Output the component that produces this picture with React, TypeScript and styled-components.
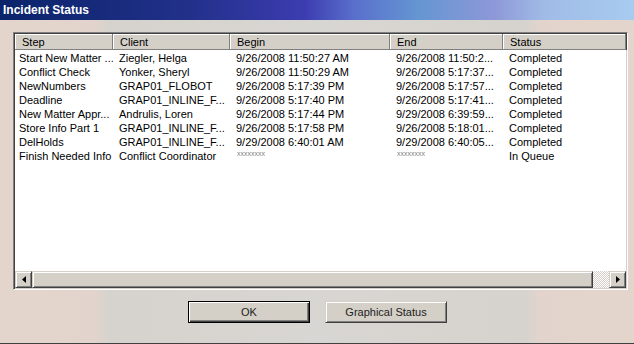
import React from "react";
import styled, { createGlobalStyle } from "styled-components";

const GlobalStyle = createGlobalStyle`
    html, body {
        margin: 0;
        padding: 0;
        background: #d6d3ce;
    }
`;

interface IRow {
    step: string;
    client: string;
    begin: string;
    end: string;
    status: string;
}

const rows: IRow[] = [
    { step: "Start New Matter ...", client: "Ziegler, Helga", begin: "9/26/2008 11:50:27 AM", end: "9/26/2008 11:50:2...", status: "Completed" },
    { step: "Conflict Check", client: "Yonker, Sheryl", begin: "9/26/2008 11:50:29 AM", end: "9/26/2008 5:17:37...", status: "Completed" },
    { step: "NewNumbers", client: "GRAP01_FLOBOT", begin: "9/26/2008 5:17:39 PM", end: "9/26/2008 5:17:57...", status: "Completed" },
    { step: "Deadline", client: "GRAP01_INLINE_F...", begin: "9/26/2008 5:17:40 PM", end: "9/26/2008 5:17:41...", status: "Completed" },
    { step: "New Matter Appr...", client: "Andrulis, Loren", begin: "9/26/2008 5:17:44 PM", end: "9/29/2008 6:39:59...", status: "Completed" },
    { step: "Store Info Part 1", client: "GRAP01_INLINE_F...", begin: "9/26/2008 5:17:58 PM", end: "9/26/2008 5:18:01...", status: "Completed" },
    { step: "DelHolds", client: "GRAP01_INLINE_F...", begin: "9/29/2008 6:40:01 AM", end: "9/29/2008 6:40:05...", status: "Completed" },
    { step: "Finish Needed Info", client: "Conflict Coordinator", begin: "", end: "", status: "In Queue" },
];

const columns = ["Step", "Client", "Begin", "End", "Status"];

export default function App() {
    return (
        <Window>
            <GlobalStyle />
            <TitleBar>Incident Status</TitleBar>
            <Body>
                <ListBox>
                    <HeaderRow>
                        {columns.map((c) => (
                            <HeaderCell key={c}>{c}</HeaderCell>
                        ))}
                    </HeaderRow>
                    <Rows>
                        {rows.map((r) => (
                            <Row key={r.step}>
                                <Cell first>{r.step}</Cell>
                                <Cell>{r.client}</Cell>
                                {r.begin ? <Cell>{r.begin}</Cell> : <Masked>xxxxxxxx</Masked>}
                                {r.end ? <Cell>{r.end}</Cell> : <Masked>xxxxxxxx</Masked>}
                                <Cell>{r.status}</Cell>
                            </Row>
                        ))}
                    </Rows>
                    <ScrollBar>
                        <ArrowButton>
                            <svg width="4" height="7" viewBox="0 0 4 7">
                                <path d="M4 0 L0 3.5 L4 7 Z" fill="#000" />
                            </svg>
                        </ArrowButton>
                        <Thumb />
                        <Track />
                        <ArrowButton>
                            <svg width="4" height="7" viewBox="0 0 4 7">
                                <path d="M0 0 L4 3.5 L0 7 Z" fill="#000" />
                            </svg>
                        </ArrowButton>
                    </ScrollBar>
                </ListBox>
                <ButtonRow>
                    <Button isDefault>OK</Button>
                    <Button>Graphical Status</Button>
                </ButtonRow>
            </Body>
        </Window>
    );
}

const Window = styled.div`
    width: 634px;
    height: 344px;
    display: flex;
    flex-direction: column;
    box-sizing: border-box;
    border-bottom: 1px solid #404040;
    background: linear-gradient(
        90deg,
        #e4d5cc 0%,
        #e2d4cc 15%,
        #d6d3ce 17%,
        #d8d6d2 50%,
        #d6d3ce 83%,
        #e2d4cc 85%,
        #e4d5cc 100%
    );
    font-family: "Liberation Sans", Arial, sans-serif;
    font-size: 11px;
    color: #000;
`;

const TitleBar = styled.div`
    height: 20px;
    flex: 0 0 20px;
    display: flex;
    align-items: center;
    padding-left: 3px;
    color: #fff;
    font-weight: bold;
    font-size: 12px;
    background: linear-gradient(
        90deg,
        #0a246a 0%,
        #22308a 30%,
        #3c3cb0 48%,
        #5a70cc 56%,
        #6496d2 66%,
        #8e98d8 78%,
        #a0bce6 86%,
        #a8cbf0 100%
    );
`;

const Body = styled.div`
    flex: 1;
    display: flex;
    flex-direction: column;
    padding: 12px 6px 0 13px;
`;

const ListBox = styled.div`
    width: 615px;
    height: 258px;
    box-sizing: border-box;
    display: flex;
    flex-direction: column;
    background: #fff;
    border-top: 1px solid #808080;
    border-left: 1px solid #808080;
    border-right: 1px solid #fff;
    border-bottom: 1px solid #fff;
    box-shadow: inset 1px 1px 0 #404040, inset -1px -1px 0 #d4d0c8;
    padding: 1px;
`;

const HeaderRow = styled.div`
    display: grid;
    grid-template-columns: 98px 117px 160px 113px 1fr;
    height: 16px;
    flex: 0 0 16px;
    background: #d4d0c8;
`;

const HeaderCell = styled.div`
    box-sizing: border-box;
    display: flex;
    align-items: center;
    padding-left: 7px;
    border-right: 1px solid #808080;
    border-bottom: 1px solid #808080;
    box-shadow: inset 1px 1px 0 #fff, 1px 0 0 #404040;
    white-space: nowrap;
    overflow: hidden;
`;

const Rows = styled.div`
    flex: 1;
    padding-top: 1px;
`;

const Row = styled.div`
    display: grid;
    grid-template-columns: 98px 117px 160px 113px 1fr;
    height: 14px;
    align-items: center;
`;

const Cell = styled.div<{ first?: boolean }>`
    padding-left: ${(p) => (p.first ? "4px" : "6px")};
    white-space: nowrap;
    overflow: hidden;
`;

const Masked = styled.div`
    padding-left: 7px;
    font-size: 7px;
    color: #808080;
    white-space: nowrap;
    overflow: hidden;
    align-self: start;
    padding-top: 1px;
`;

const ScrollBar = styled.div`
    display: flex;
    height: 17px;
    flex: 0 0 17px;
`;

const raised = `
    box-sizing: border-box;
    background: #d4d0c8;
    border-top: 1px solid #d4d0c8;
    border-left: 1px solid #d4d0c8;
    border-right: 1px solid #404040;
    border-bottom: 1px solid #404040;
    box-shadow: inset 1px 1px 0 #fff, inset -1px -1px 0 #808080;
`;

const ArrowButton = styled.div`
    ${raised}
    width: 17px;
    flex: 0 0 17px;
    display: flex;
    align-items: center;
    justify-content: center;
`;

const Thumb = styled.div`
    ${raised}
    flex: 0 0 561px;
`;

const Track = styled.div`
    flex: 1;
    background-color: #fff;
    background-image: conic-gradient(#d4d0c8 25%, #fff 0 50%, #d4d0c8 0 75%, #fff 0);
    background-size: 2px 2px;
`;

const ButtonRow = styled.div`
    display: flex;
    justify-content: center;
    gap: 15px;
    margin-top: 11px;
    padding-right: 6px;
`;

const Button = styled.button<{ isDefault?: boolean }>`
    width: 122px;
    height: 22px;
    box-sizing: border-box;
    font-family: "Liberation Sans", Arial, sans-serif;
    font-size: 11px;
    color: #222;
    background: #d4d0c8;
    padding: 0;
    border: 1px solid ${(p) => (p.isDefault ? "#000" : "#d4d0c8")};
    box-shadow: ${(p) =>
        p.isDefault
            ? "inset 1px 1px 0 #fff, inset -1px -1px 0 #404040, inset -2px -2px 0 #808080"
            : "inset 1px 1px 0 #fff, inset -1px -1px 0 #808080"};
    border-right-color: ${(p) => (p.isDefault ? "#000" : "#404040")};
    border-bottom-color: ${(p) => (p.isDefault ? "#000" : "#404040")};
`;
